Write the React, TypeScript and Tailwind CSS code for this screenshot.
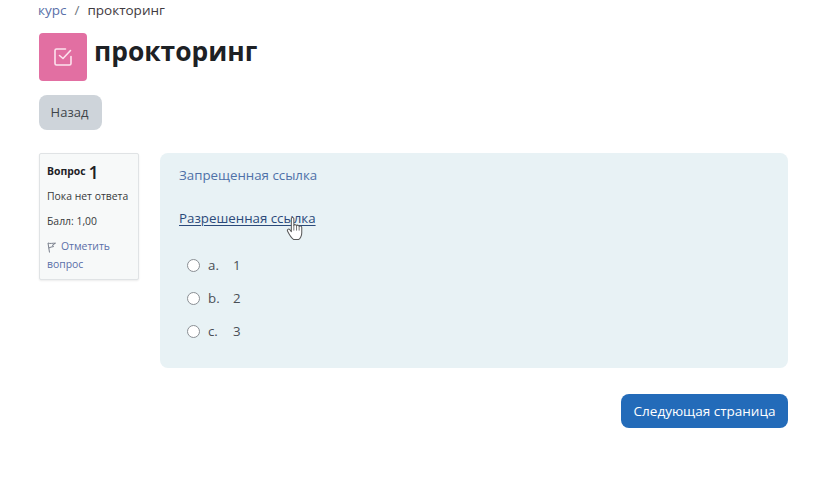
function FlagIcon() {
  return (
    <svg width="9" height="11" viewBox="0 0 9 11" fill="none" stroke="#6b7280" strokeWidth="0.9" className="mr-1 inline-block">
      <path d="M2.5 10.5 L1 1 C3 2 6 1 8.5 1.2 L5.5 3 L6.5 4.6 C5 4.8 3 5.2 1.8 6" />
    </svg>
  );
}

function CheckIcon() {
  return (
    <svg width="20" height="20" viewBox="0 0 20 20" fill="none" stroke="#fde3ee" strokeWidth="1.6" strokeLinecap="round" strokeLinejoin="round">
      <path d="M12.5 2 H3.5 C2.6 2 2 2.6 2 3.5 V16.5 C2 17.4 2.6 18 3.5 18 H16.5 C17.4 18 18 17.4 18 16.5 V9.5" />
      <path d="M6.5 8.5 L10 11.5 L17.5 3.5" />
    </svg>
  );
}

function HandCursor() {
  return (
    <svg width="18" height="24" viewBox="0 0 18 24" className="absolute left-[107px] top-[7px] h-[25px] w-[19px]">
      <path
        d="M5 2.5 C5 1 7.4 1 7.4 2.5 L7.4 9 C7.8 8 9.8 8 10 9.4 C10.4 8.4 12.3 8.6 12.5 10 C13 9.2 15 9.6 15 11 L15 16 C15 19 13.5 22 12 22.5 L7 22.5 C5.5 21.5 2.8 17.5 1.3 14.5 C0.6 13 2.4 12 3.4 13 L5 15 Z"
        fill="#fff"
        stroke="#5a5a5a"
        strokeWidth="1"
        strokeLinejoin="round"
      />
      <path d="M7.4 9 V14 M10 9.4 V14 M12.5 10 V14" stroke="#5a5a5a" strokeWidth="0.8" />
    </svg>
  );
}

const answers = [
  ['a.', '1'],
  ['b.', '2'],
  ['c.', '3'],
];

export default function App() {
  return (
    <div className="h-[493px] w-[822px] overflow-hidden bg-white pl-[39px] pr-[34px] font-['Open_Sans','Noto_Sans',sans-serif] text-[#373a3c]">
      <nav className="-ml-px flex h-[21px] items-center gap-[8px] text-[13.5px] leading-none">
        <span className="text-[#5a6fa8]">курс</span>
        <span className="text-[#6c757d]">/</span>
        <span className="text-[#3f3a40]">прокторинг</span>
      </nav>

      <header className="mt-[12px] flex items-start gap-[7px]">
        <div className="flex h-[48px] w-[48px] items-center justify-center rounded-[4px] bg-[#e26fa2]">
          <CheckIcon />
        </div>
        <h1 className="-mt-px text-[26.4px] leading-[38px] font-bold text-[#1d2125]">прокторинг</h1>
      </header>

      <button className="mt-[14px] flex h-[35px] w-[63px] items-center justify-center rounded-[8px] bg-[#ced4da] pr-[2px] text-[13px] text-[#3f444a]">
        Назад
      </button>

      <main className="mt-[23px] flex items-start gap-[21px]">
        <aside className="h-[127px] w-[100px] shrink-0 rounded-[2px] border border-[#e0e3e5] bg-[#f7f9f9] px-[7px] pt-[8px] text-[10.4px] text-[#373a3c] shadow-[0_1px_2px_rgba(0,0,0,0.08)]">
          <div className="flex h-[20px] items-center gap-[3px] font-bold text-[#1d2125]">
            <span>Вопрос</span>
            <span className="text-[18px] leading-none font-semibold">1</span>
          </div>
          <p className="mt-[7px] leading-[14px]">Пока нет ответа</p>
          <p className="mt-[11px] leading-[14px]">Балл: 1,00</p>
          <p className="mt-[9px] leading-[18px] text-[#5a6fa8]">
            <FlagIcon />
            <span className="ml-[1px]">Отметить вопрос</span>
          </p>
        </aside>

        <section className="h-[215px] w-[628px] rounded-[8px] bg-[#e8f2f5] px-[19px] pt-[13px] text-[13.3px]">
          <p className="leading-[18px] text-[#4f71a8]">Запрещенная ссылка</p>
          <p className="relative mt-[25px] w-fit leading-[18px] text-[#2b4a7a] underline underline-offset-2">
            Разрешенная ссылка
            <HandCursor />
          </p>
          <ul className="mt-[28px] flex flex-col gap-[12px] pl-[8px]">
            {answers.map(([letter, value]) => (
              <li key={letter} className="flex h-[21px] items-center text-[#4a4f55]">
                <span className="h-[13px] w-[13px] rounded-full border border-[#8a8f94] bg-white" />
                <span className="ml-[8px] w-[25px]">{letter}</span>
                <span>{value}</span>
              </li>
            ))}
          </ul>
        </section>
      </main>

      <div className="mt-[26px] flex justify-end">
        <button className="flex h-[34px] w-[167px] items-center justify-center rounded-[8px] bg-[#236bb9] text-[13.5px] text-white">
          Следующая страница
        </button>
      </div>
    </div>
  );
}
